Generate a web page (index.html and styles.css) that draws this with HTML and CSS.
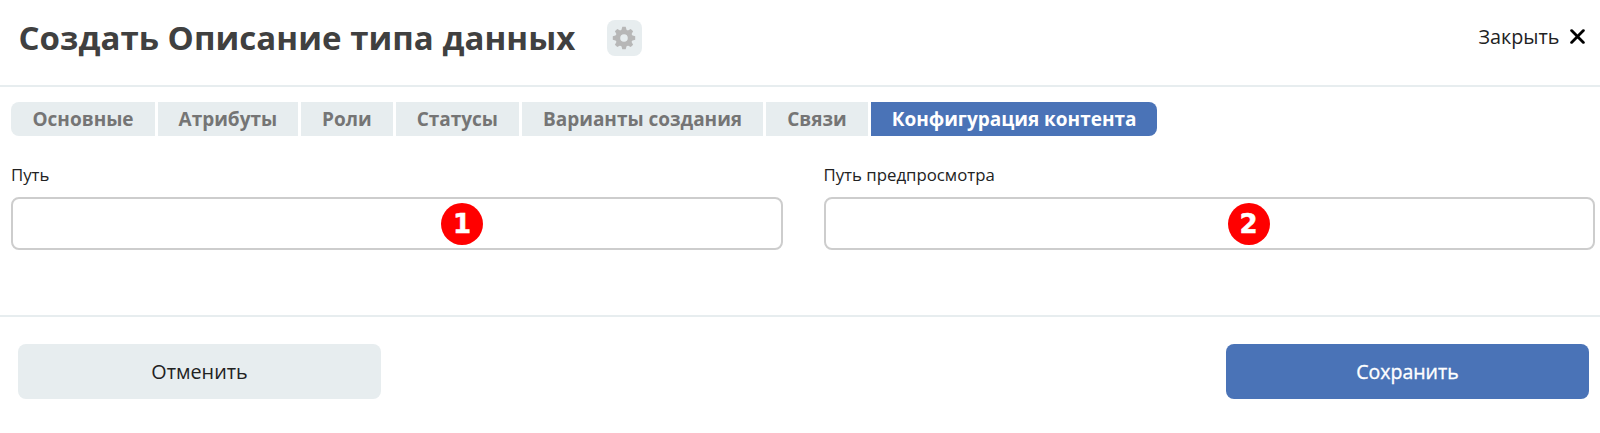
FILE: index.html
```
<!DOCTYPE html>
<html lang="ru">
<head>
<meta charset="utf-8">
<title>Создать Описание типа данных</title>
<link rel="stylesheet" href="styles.css">
</head>
<body>
<header class="header">
  <h1 class="title">Создать Описание типа данных</h1>
  <button class="settings" aria-label="Настройки">
    <svg class="gear" viewBox="-12 -12 24 24"><g fill="#b7b7b7"><g id="teeth"><path d="M-2.9-7L-1.7-11.2H1.7L2.9-7V7L1.7 11.2H-1.7L-2.9 7Z"/><path d="M-7-2.9L-11.2-1.7V1.7L-7 2.9H7L11.2 1.7V-1.7L7-2.9Z"/></g><use href="#teeth" transform="rotate(45)"/><circle r="8.6"/></g><circle r="3.8" fill="#e7edef"/></svg>
  </button>
  <button class="close"><span class="close-text">Закрыть</span>
    <svg class="cross" viewBox="0 0 14 14"><path d="M1.5 1.5l11 11M12.5 1.5l-11 11" fill="none" stroke="#000" stroke-width="2.6" stroke-linecap="round"/></svg>
  </button>
</header>
<main class="main">
  <nav class="tabs">
    <a class="tab">Основные</a>
    <a class="tab">Атрибуты</a>
    <a class="tab">Роли</a>
    <a class="tab">Статусы</a>
    <a class="tab">Варианты создания</a>
    <a class="tab">Связи</a>
    <a class="tab tab-active">Конфигурация контента</a>
  </nav>
  <div class="fields">
    <div class="field"><label class="label">Путь</label><div class="input"><span class="badge badge-first">1</span></div></div>
    <div class="field"><label class="label">Путь предпросмотра</label><div class="input"><span class="badge badge-second">2</span></div></div>
  </div>
</main>
<footer class="footer">
  <button class="button">Отменить</button>
  <button class="button button-primary">Сохранить</button>
</footer>
</body>
</html>
```
FILE: styles.css
```
* { box-sizing: border-box; }
body { margin: 0; height: 433px; background: #fff; font-family: "Open Sans", "Noto Sans", sans-serif; color: #222; overflow: hidden; }
button { margin: 0; padding: 0; border: 0; background: none; font-family: inherit; color: inherit; }
.header { display: flex; align-items: center; height: 87px; padding: 0 15px 10px 18.5px; border-bottom: 2px solid #e7edef; }
.title { margin: 0; font-size: 33px; line-height: 44px; font-weight: 700; letter-spacing: 0.05px; color: #404040; white-space: nowrap; width: 588.5px; }
.settings { display: flex; align-items: center; justify-content: center; width: 34.5px; height: 36px; border-radius: 8px; background: #e7edef; }
.gear { width: 24px; height: 24px; }
.close { display: flex; align-items: center; gap: 10.5px; margin: 0 0 2px auto; font-size: 19.8px; line-height: 26px; }
.cross { width: 15px; height: 15px; }
.main { height: 228px; padding: 15px 5px 0 11px; }
.tabs { display: flex; gap: 3px; height: 34px; }
.tab { padding: 0 21px; background: #e7edef; color: #757575; font-size: 19px; font-weight: 700; line-height: 34px; letter-spacing: -0.01px; white-space: nowrap; }
.tab:first-child { padding-left: 21.5px; border-radius: 8px 0 0 8px; }
.tab-active { border-radius: 0 8px 8px 0; background: #4a73b7; color: #fff; }
.fields { display: grid; grid-template-columns: 1fr 1fr; gap: 41px; margin-top: 27px; }
.label { display: block; height: 34px; font-size: 16.8px; line-height: 24px; color: #222; }
.input { position: relative; height: 53px; border: 2px solid #cdcdcd; border-radius: 8px; }
.badge { position: absolute; top: 3.5px; width: 42px; height: 42px; border-radius: 50%; background: #f00; color: #fff; font: 700 26px/42px "DejaVu Sans", sans-serif; text-align: center; -webkit-text-stroke: 0.5px #fff; }
.badge-first { left: 428px; }
.badge-second { left: 402px; }
.footer { display: flex; justify-content: space-between; padding: 27px 11px 0 18px; border-top: 2px solid #e7edef; }
.button { width: 363px; height: 55px; border-radius: 8px; background: #e7edef; font-size: 19.8px; line-height: 54px; }
.button-primary { background: #4a73b7; color: #fff; font-size: 19.5px; -webkit-text-stroke: 0.35px #fff; }
```
